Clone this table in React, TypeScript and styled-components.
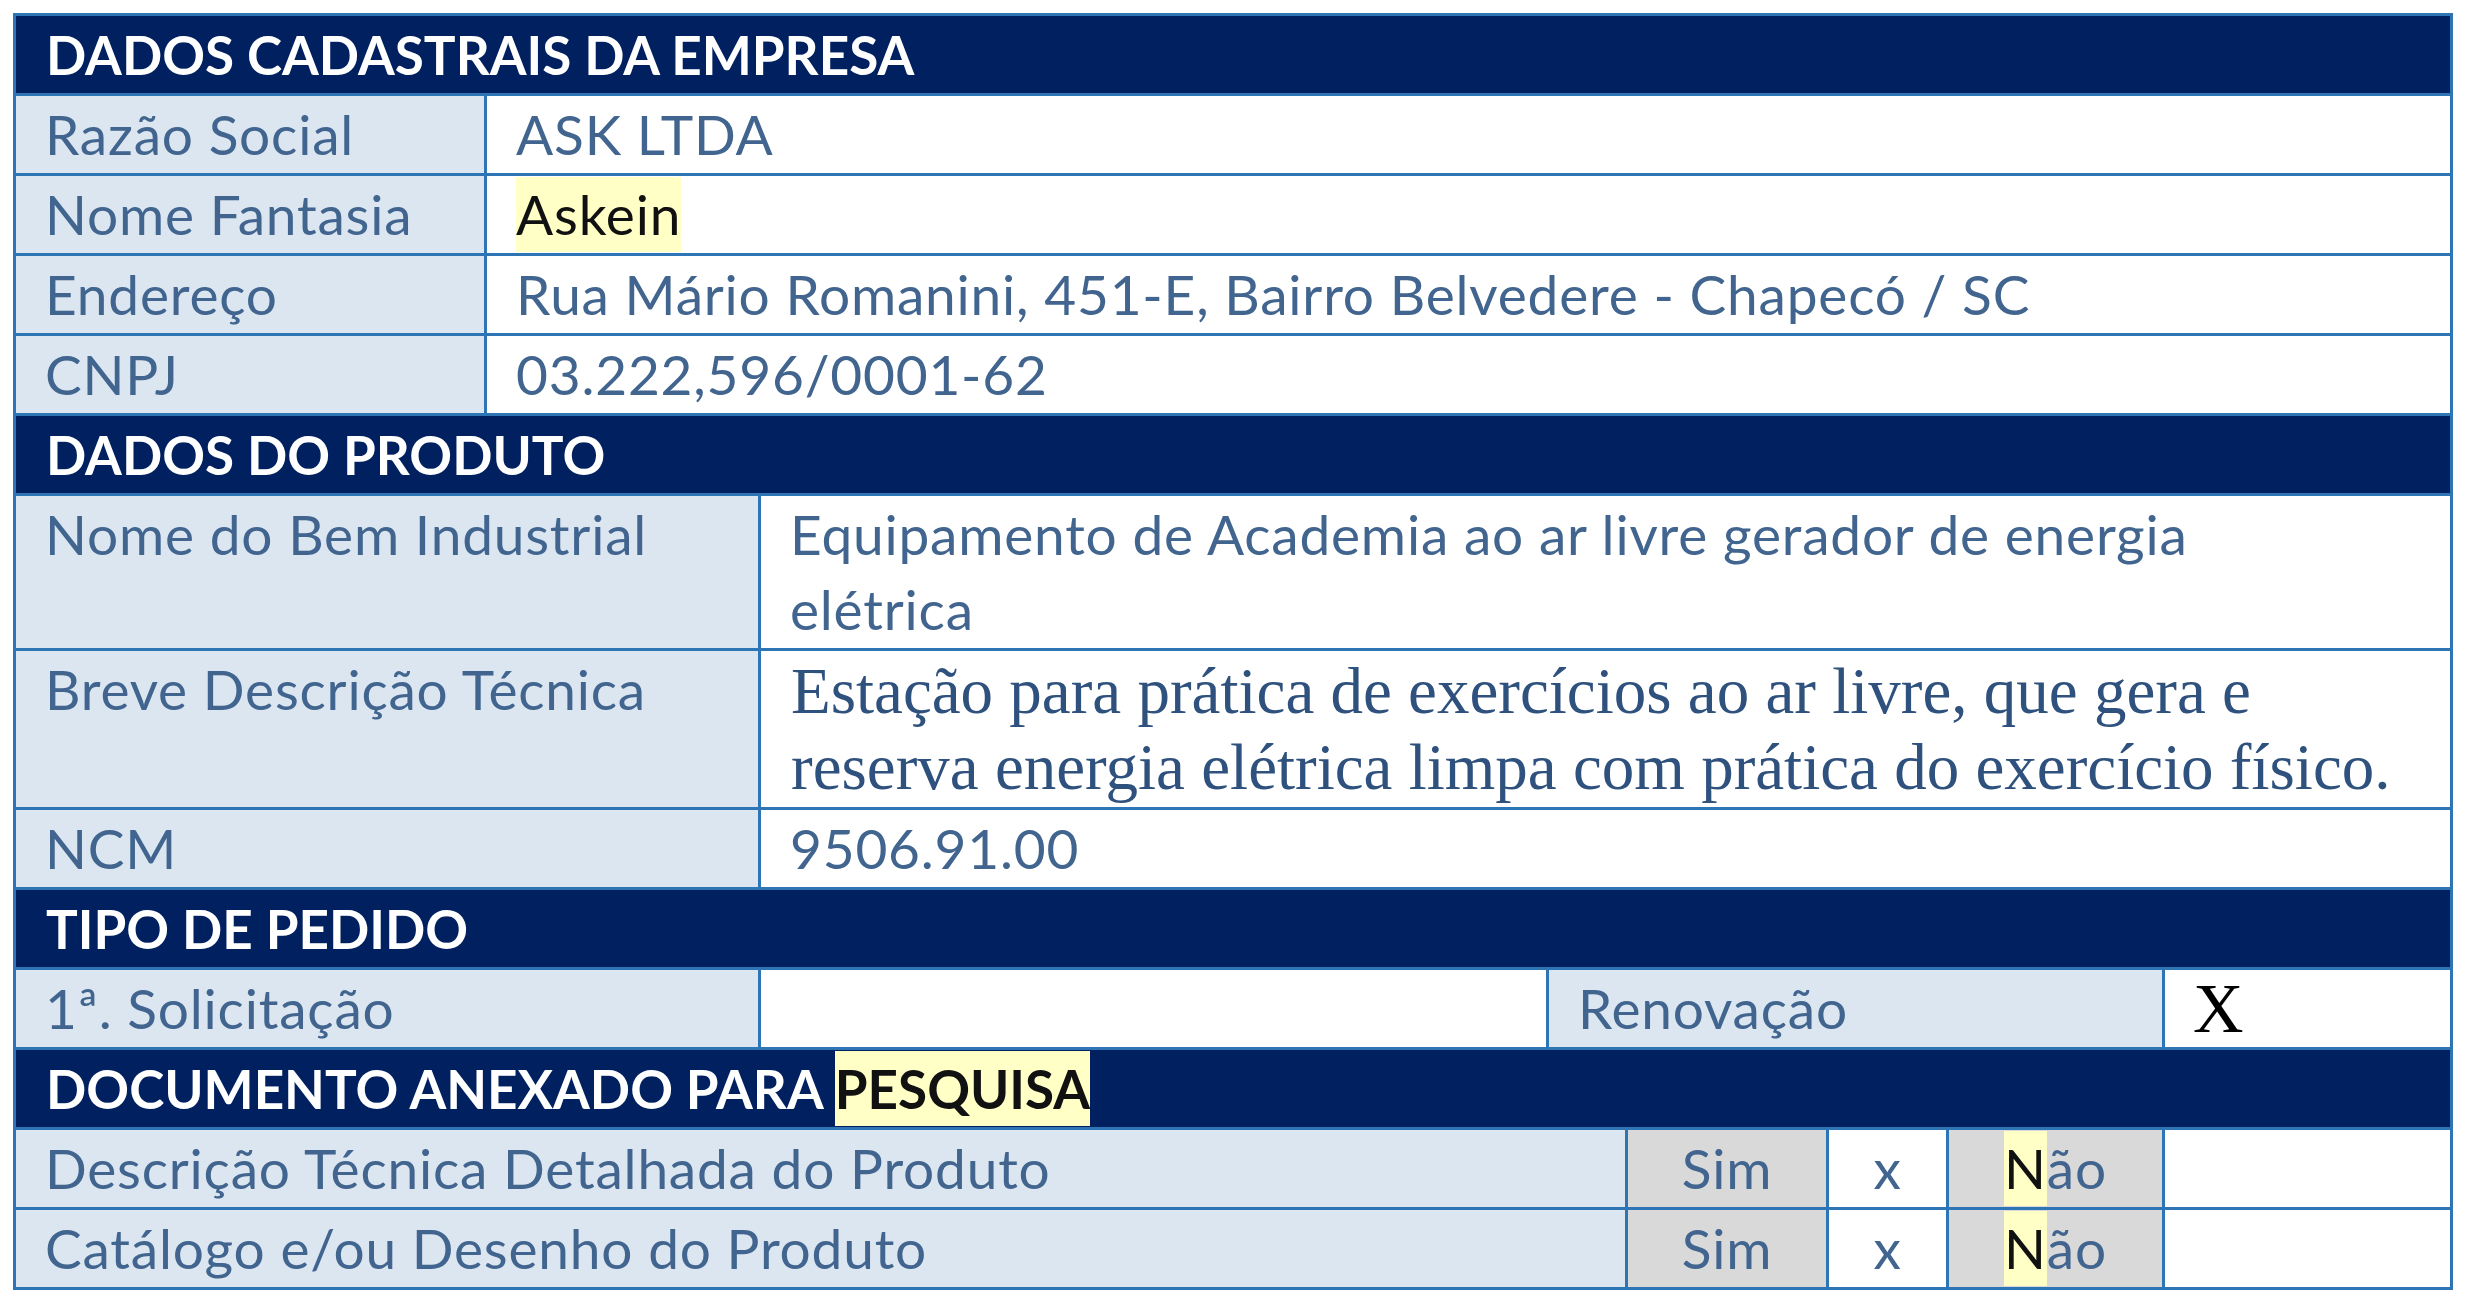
import React from "react";
import styled, { createGlobalStyle } from "styled-components";

const GlobalStyle = createGlobalStyle`
  html, body {
    margin: 0;
    padding: 0;
    background: #ffffff;
  }
  body {
    font-family: Lato, "Liberation Sans", sans-serif;
  }
`;

const Page = styled.div`
  padding: 13px 12px 10px 13px;
  background: #ffffff;
`;

const Table = styled.div`
  width: 2440px;
  box-sizing: border-box;
  padding: 3px;
  display: flex;
  flex-direction: column;
  gap: 3px;
  background: #2e75b6;
`;

const Row = styled.div<{ $cols: string }>`
  display: grid;
  grid-template-columns: ${(p) => p.$cols};
  gap: 3px;
`;

const SectionHeader = styled.div`
  background: #002060;
  color: #ffffff;
  font-family: Lato, "Liberation Sans", sans-serif;
  font-weight: 700;
  font-size: 53px;
  line-height: 75px;
  padding: 1px 30px;
  white-space: nowrap;
`;

type Tone = "label" | "value" | "gray";

const toneBg: Record<Tone, string> = {
  label: "#dce6f1",
  value: "#ffffff",
  gray: "#d9d9d9",
};

const Cell = styled.div<{ $tone: Tone; $center?: boolean }>`
  background: ${(p) => toneBg[p.$tone]};
  color: #41658f;
  font-family: Lato, "Liberation Sans", sans-serif;
  font-size: 55px;
  letter-spacing: 0.8px;
  line-height: 75px;
  padding: 1px ${(p) => (p.$center ? "0" : "29px")};
  text-align: ${(p) => (p.$center ? "center" : "left")};
  white-space: nowrap;
`;

const SerifCell = styled.div`
  background: #ffffff;
  color: #2f517e;
  font-family: "Liberation Serif", "Times New Roman", serif;
  font-size: 65px;
  line-height: 76px;
  padding: 2px 10px 2px 30px;
`;

const MarkCell = styled.div`
  background: #ffffff;
  color: #000000;
  font-family: "Liberation Serif", "Times New Roman", serif;
  font-size: 70px;
  line-height: 75px;
  padding: 1px 28px;
`;

const Highlight = styled.span<{ $bold?: boolean }>`
  display: inline-block;
  background: #ffffc6;
  color: #111111;
  line-height: inherit;
  font-weight: ${(p) => (p.$bold ? 700 : 400)};
`;

const S1 = "468px 1fr";
const S2 = "742px 1fr";
const S3 = "742px 785px 613px 1fr";
const S4 = "1609px 198px 117px 213px 1fr";

export default function App() {
  return (
    <>
      <GlobalStyle />
      <Page>
        <Table>
          <SectionHeader>DADOS CADASTRAIS DA EMPRESA</SectionHeader>
          <Row $cols={S1}>
            <Cell $tone="label">Razão Social</Cell>
            <Cell $tone="value">ASK LTDA</Cell>
          </Row>
          <Row $cols={S1}>
            <Cell $tone="label">Nome Fantasia</Cell>
            <Cell $tone="value">
              <Highlight>Askein</Highlight>
            </Cell>
          </Row>
          <Row $cols={S1}>
            <Cell $tone="label">Endereço</Cell>
            <Cell $tone="value">
              Rua Mário Romanini, 451-E, Bairro Belvedere - Chapecó / SC
            </Cell>
          </Row>
          <Row $cols={S1}>
            <Cell $tone="label">CNPJ</Cell>
            <Cell $tone="value">03.222,596/0001-62</Cell>
          </Row>

          <SectionHeader>DADOS DO PRODUTO</SectionHeader>
          <Row $cols={S2}>
            <Cell $tone="label">Nome do Bem Industrial</Cell>
            <Cell $tone="value">
              Equipamento de Academia ao ar livre gerador de energia
              <br />
              elétrica
            </Cell>
          </Row>
          <Row $cols={S2}>
            <Cell $tone="label">Breve Descrição Técnica</Cell>
            <SerifCell>
              Estação para prática de exercícios ao ar livre, que gera e
              <br />
              reserva energia elétrica limpa com prática do exercício físico.
            </SerifCell>
          </Row>
          <Row $cols={S2}>
            <Cell $tone="label">NCM</Cell>
            <Cell $tone="value">9506.91.00</Cell>
          </Row>

          <SectionHeader>TIPO DE PEDIDO</SectionHeader>
          <Row $cols={S3}>
            <Cell $tone="label">1ª. Solicitação</Cell>
            <Cell $tone="value" />
            <Cell $tone="label">Renovação</Cell>
            <MarkCell>X</MarkCell>
          </Row>

          <SectionHeader>
            DOCUMENTO ANEXADO PARA <Highlight $bold>PESQUISA</Highlight>
          </SectionHeader>
          <Row $cols={S4}>
            <Cell $tone="label">Descrição Técnica Detalhada do Produto</Cell>
            <Cell $tone="gray" $center>
              Sim
            </Cell>
            <Cell $tone="value" $center>
              x
            </Cell>
            <Cell $tone="gray" $center>
              <Highlight>N</Highlight>ão
            </Cell>
            <Cell $tone="value" />
          </Row>
          <Row $cols={S4}>
            <Cell $tone="label">Catálogo e/ou Desenho do Produto</Cell>
            <Cell $tone="gray" $center>
              Sim
            </Cell>
            <Cell $tone="value" $center>
              x
            </Cell>
            <Cell $tone="gray" $center>
              <Highlight>N</Highlight>ão
            </Cell>
            <Cell $tone="value" />
          </Row>
        </Table>
      </Page>
    </>
  );
}
